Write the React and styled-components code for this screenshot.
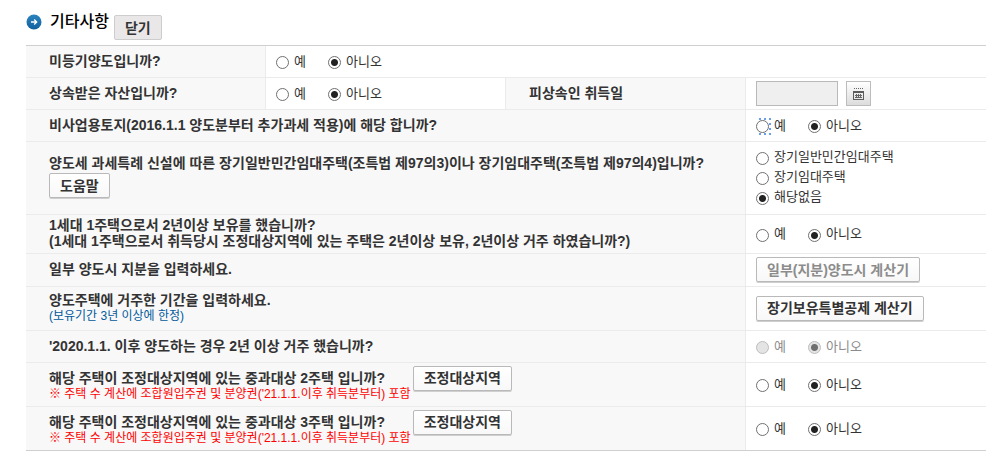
import React from 'react';
import styled, { createGlobalStyle, css } from 'styled-components';

const GlobalStyle = createGlobalStyle`
	body {
		margin: 0;
		background: #fff;
		color: #333;
		font: 13px/20px 'Liberation Sans', 'Noto Sans CJK KR', sans-serif;
	}
	button, input {
		font-family: inherit;
		margin: 0;
	}
`;

const Page = styled.main`
	padding: 14px 9px 10px 26px;
`;

const Header = styled.header`
	display: flex;
	align-items: flex-start;
	height: 31px;
`;

const Title = styled.h2`
	display: flex;
	align-items: center;
	gap: 8px;
	margin: 0 5px 0 0;
	color: #000;
	font-size: 16px;
	line-height: 16px;
	font-weight: 500;
`;

const Button = styled.button`
	box-sizing: border-box;
	height: 25px;
	margin-bottom: 1px;
	padding: 0 10px;
	border: 1px solid #b9b9b9;
	border-radius: 2px;
	background: linear-gradient(#fff, #f8f8f8);
	box-shadow: 0 1px 0 #cfcfcf;
	color: #333;
	font-size: 14px;
	line-height: 20px;
	font-weight: 700;
	white-space: nowrap;
	vertical-align: top;

	&:disabled {
		color: #8c8c8c;
	}
`;

const CloseButton = styled(Button)`
	margin-top: 1px;
	border-color: #cdcdcd;
	background: #e9e7e7;
	box-shadow: none;
`;

const Table = styled.table`
	width: 100%;
	table-layout: fixed;
	border-collapse: separate;
	border-spacing: 0;
	border-top: 1px solid #cfcfcf;
	border-bottom: 1px solid #cfcfcf;

	tr:last-child > * {
		height: 43px;
		border-bottom: 0;
	}
`;

const cell = css`
	box-sizing: border-box;
	height: ${(props) => (props.$tall ? 44 : 32)}px;
	border-bottom: 1px solid #ebebeb;
	text-align: left;
	vertical-align: middle;
`;

const Head = styled.th`
	${cell}
	padding: 2px 10px 4px 23px;
	border-right: 1px solid #ebebeb;
	background: #f8f8f8;
	font-size: 14px;
	line-height: 16px;
	font-weight: 700;
`;

const Cell = styled.td`
	${cell}
	padding: ${(props) => (props.$roomy ? '5px 10px 7px' : '3px 10px')};
	border-right: ${(props) => (props.$divided ? '1px solid #ebebeb' : 0)};
`;

const Question = styled.div`
	display: flex;
	align-items: flex-start;
	gap: 2px;
	white-space: nowrap;
`;

const Stack = styled(Question)`
	flex-direction: column;
`;

const QuestionText = styled.div`
	padding: 4px 0 0;
`;

const Note = styled.div`
	color: ${(props) => (props.$warn ? '#f00' : '#005a9c')};
	font-size: 12px;
	line-height: 16px;
	font-weight: 400;
`;

const Options = styled.div`
	display: flex;
	flex-direction: ${(props) => (props.$vertical ? 'column' : 'row')};
	gap: ${(props) => (props.$vertical ? 0 : 22)}px;
`;

const Option = styled.label`
	display: flex;
	align-items: center;
	gap: 5px;
	position: relative;
	color: ${(props) => (props.$disabled ? '#8c8c8c' : '#333')};
	line-height: 20px;
	white-space: nowrap;
`;

const FocusMark = styled.svg`
	position: absolute;
	left: 0;
	top: 2px;
`;

const Radio = styled.input`
	appearance: none;
	box-sizing: border-box;
	width: 13px;
	height: 13px;
	margin-top: 2px;
	border: 1px solid #707070;
	border-radius: 50%;
	background: #fff;
	position: relative;
	z-index: 1;

	&:checked {
		background: radial-gradient(circle, #222 3px, #fff 4px);
	}
	&:disabled {
		border-color: #bcbcbc;
		background: #e4e4e4;
	}
	&:disabled:checked {
		background: radial-gradient(circle, #707070 3px, #e4e4e4 4px);
	}
`;

const DateField = styled.div`
	display: flex;
	gap: 8px;
`;

const DateInput = styled.input`
	box-sizing: border-box;
	width: 82px;
	height: 25px;
	border: 1px solid #b9b9b9;
	background: #efefef;
`;

const IconButton = styled.button`
	display: flex;
	align-items: center;
	justify-content: center;
	box-sizing: border-box;
	width: 25px;
	height: 25px;
	padding: 0;
	border: 1px solid #bcbcbc;
	background: linear-gradient(#fff, #dcdcdc);
`;

const ArrowIcon = () => (
	<svg width="16" height="16" viewBox="0 0 16 16" aria-hidden="true">
		<defs>
			<linearGradient id="ball" x2="0" y2="1">
				<stop stopColor="#2b84bf" />
				<stop offset="1" stopColor="#11609f" />
			</linearGradient>
		</defs>
		<circle cx="8" cy="8" r="7.5" fill="url(#ball)" />
		<path d="M5 8h5.5M8.2 5.5 10.7 8l-2.5 2.5" fill="none" stroke="#fff" strokeWidth="1.3" />
	</svg>
);

const CalendarIcon = () => (
	<svg width="11" height="13" viewBox="0 0 11 13" shapeRendering="crispEdges" aria-hidden="true">
		<path d="M1 1.5h9" stroke="#666" strokeDasharray="1 1" />
		<path d="M0 4h11v9H0zM1 6v6h9V6z" fill="#5c5c5c" fillRule="evenodd" />
		<path d="M2 8.5h7M2 10.5h7M3.5 7v4M5.5 7v4M7.5 7v4" stroke="#666" />
	</svg>
);

const Choice = ({ name, text, checked, disabled, focused }) => (
	<Option $disabled={disabled}>
		<Radio type="radio" name={name} defaultChecked={checked} disabled={disabled} />
		{focused && (
			<FocusMark width="16" height="17" viewBox="0 0 16 17" fill="#689fe8" shapeRendering="crispEdges" aria-hidden="true">
				<path d="M3 0h2v2H3zM8 0h2v2H8zM13 0h2v2h-2zM13 5h2v2h-2zM13 10h2v2h-2zM13 15h2v2h-2zM8 15h2v2H8zM3 15h2v2H3z" />
			</FocusMark>
		)}
		{text}
	</Option>
);

const YesNo = ({ name, label, disabled, focused }) => (
	<Options role="radiogroup" aria-label={label}>
		<Choice name={name} text="예" disabled={disabled} focused={focused} />
		<Choice name={name} text="아니오" checked disabled={disabled} />
	</Options>
);

const HeavyTaxRow = ({ count }) => (
	<tr>
		<Head scope="row" colSpan={3} $tall>
			<Question>
				<QuestionText>
					해당 주택이 조정대상지역에 있는 중과대상 {count}주택 입니까?
					<Note $warn>※ 주택 수 계산에 조합원입주권 및 분양권('21.1.1.이후 취득분부터) 포함</Note>
				</QuestionText>
				<Button type="button">조정대상지역</Button>
			</Question>
		</Head>
		<Cell $tall><YesNo name={`heavy${count}`} label={`중과대상 ${count}주택`} /></Cell>
	</tr>
);

const App = () => (
	<Page>
		<GlobalStyle />
		<Header>
			<Title><ArrowIcon />기타사항</Title>
			<CloseButton type="button">닫기</CloseButton>
		</Header>
		<Table>
			<colgroup>
				<col />
				<col />
				<col />
				<col />
			</colgroup>
			<tbody>
				<tr>
					<Head scope="row">미등기양도입니까?</Head>
					<Cell colSpan={3}><YesNo name="unregistered" label="미등기양도" /></Cell>
				</tr>
				<tr>
					<Head scope="row">상속받은 자산입니까?</Head>
					<Cell $divided><YesNo name="inherited" label="상속받은 자산" /></Cell>
					<Head scope="row"><label htmlFor="acquired">피상속인 취득일</label></Head>
					<Cell>
						<DateField>
							<DateInput id="acquired" type="text" disabled />
							<IconButton type="button" aria-label="달력"><CalendarIcon /></IconButton>
						</DateField>
					</Cell>
				</tr>
				<tr>
					<Head scope="row" colSpan={3}>비사업용토지(2016.1.1 양도분부터 추가과세 적용)에 해당 합니까?</Head>
					<Cell><YesNo name="land" label="비사업용토지" focused /></Cell>
				</tr>
				<tr>
					<Head scope="row" colSpan={3}>
						<Stack>
							양도세 과세특례 신설에 따른 장기일반민간임대주택(조특법 제97의3)이나 장기임대주택(조특법 제97의4)입니까?
							<Button type="button">도움말</Button>
						</Stack>
					</Head>
					<Cell $roomy>
						<Options $vertical role="radiogroup" aria-label="임대주택">
							<Choice name="rental" text="장기일반민간임대주택" />
							<Choice name="rental" text="장기임대주택" />
							<Choice name="rental" text="해당없음" checked />
						</Options>
					</Cell>
				</tr>
				<tr>
					<Head scope="row" colSpan={3}>
						1세대 1주택으로서 2년이상 보유를 했습니까?<br />
						(1세대 1주택으로서 취득당시 조정대상지역에 있는 주택은 2년이상 보유, 2년이상 거주 하였습니까?)
					</Head>
					<Cell><YesNo name="held" label="2년이상 보유" /></Cell>
				</tr>
				<tr>
					<Head scope="row" colSpan={3}>일부 양도시 지분을 입력하세요.</Head>
					<Cell><Button type="button" disabled>일부(지분)양도시 계산기</Button></Cell>
				</tr>
				<tr>
					<Head scope="row" colSpan={3} $tall>
						양도주택에 거주한 기간을 입력하세요.
						<Note>(보유기간 3년 이상에 한정)</Note>
					</Head>
					<Cell $tall><Button type="button">장기보유특별공제 계산기</Button></Cell>
				</tr>
				<tr>
					<Head scope="row" colSpan={3}>'2020.1.1. 이후 양도하는 경우 2년 이상 거주 했습니까?</Head>
					<Cell><YesNo name="lived" label="2년 이상 거주" disabled /></Cell>
				</tr>
				<HeavyTaxRow count={2} />
				<HeavyTaxRow count={3} />
			</tbody>
		</Table>
	</Page>
);

export default App;
